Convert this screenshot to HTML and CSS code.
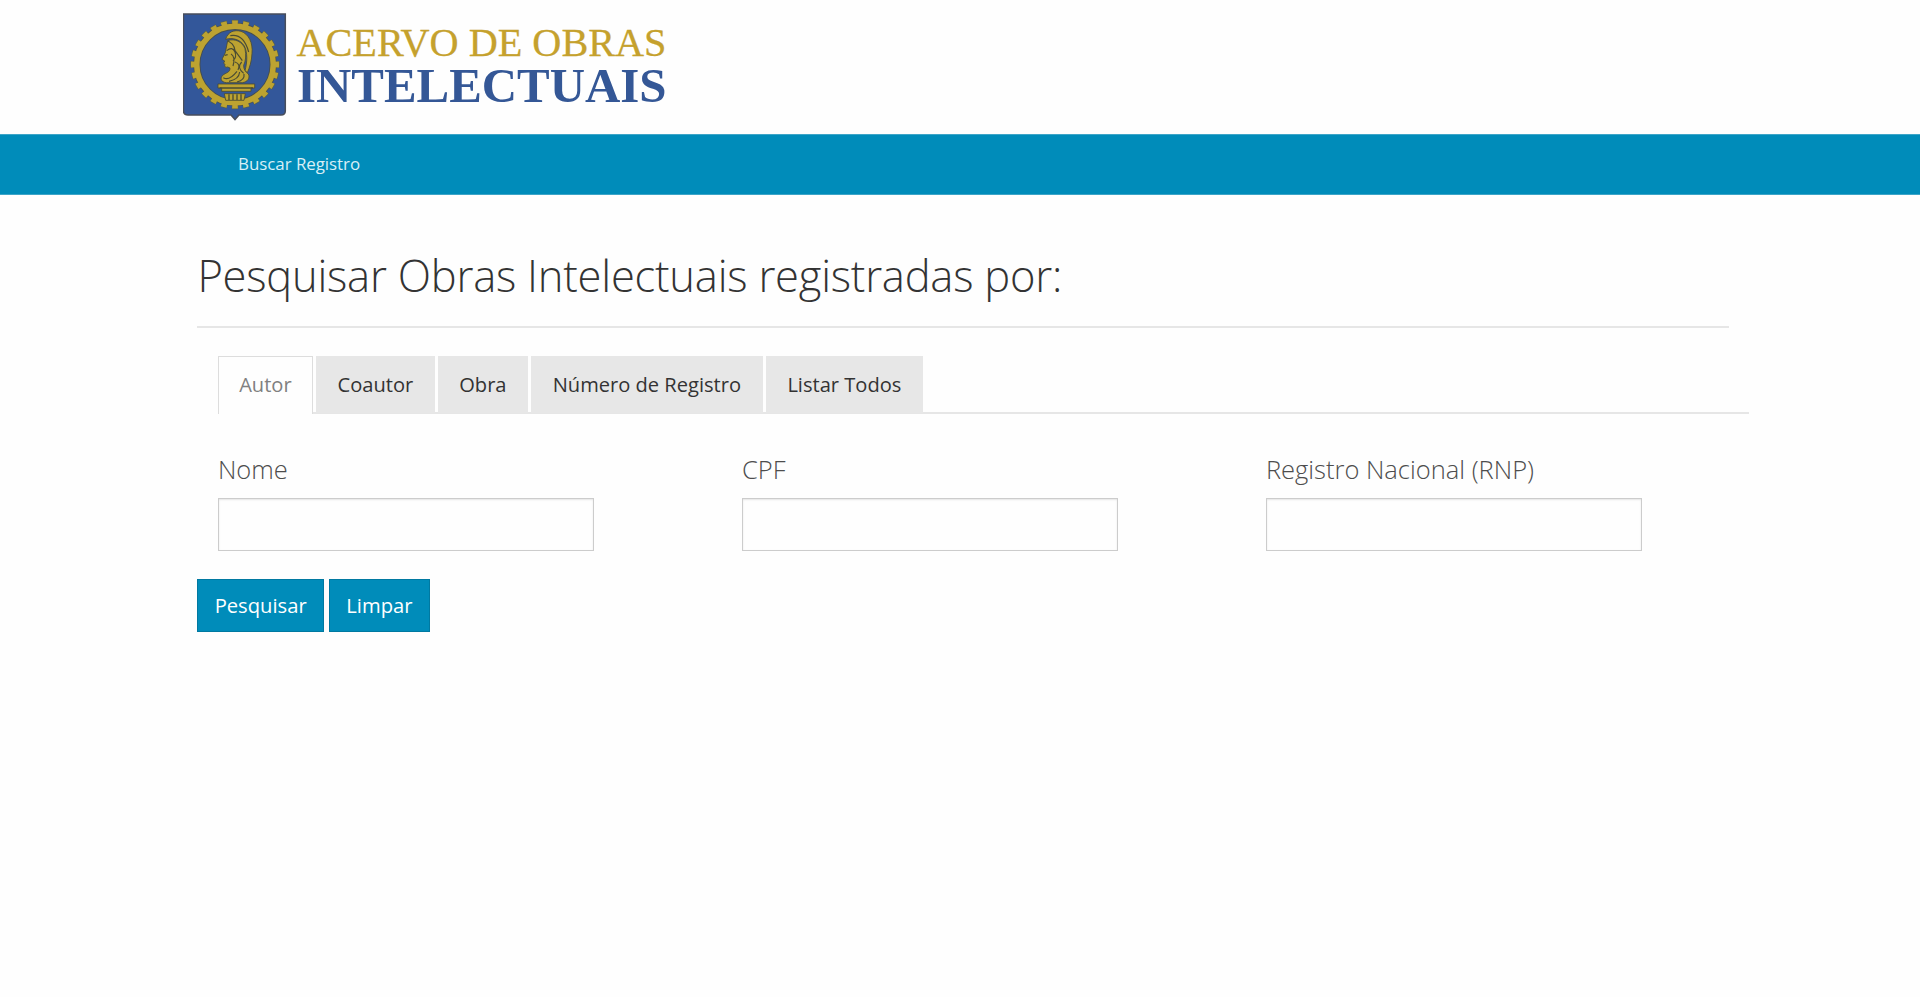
FILE: index.html
```html
<!DOCTYPE html>
<html lang="pt-BR">
<head>
<meta charset="utf-8">
<title>Acervo de Obras Intelectuais</title>
<link rel="stylesheet" href="styles.css">
</head>
<body>
<header class="header">
  <svg class="logo" width="490" height="134" viewBox="183 0 490 134" role="img" aria-label="Acervo de Obras Intelectuais">
    <path d="M183.500 14H285.300V111Q285.300 115 281 115H239L235 119.500L231 115H188Q183.500 115 183.500 111Z" fill="#33579a" stroke="#484e5c" stroke-width="1.500"/>
    <g fill="none">
      <circle cx="235" cy="64.500" r="42" stroke="#55604f" stroke-width="5.400" pathLength="240" stroke-dasharray="6 4" stroke-dashoffset="3"/>
      <circle cx="235" cy="64.500" r="38.200" stroke="#454e50" stroke-width="7.200"/>
      <circle cx="235" cy="64.500" r="41.800" stroke="#bda331" stroke-width="4.400" pathLength="240" stroke-dasharray="5.200 4.800" stroke-dashoffset="2.600"/>
      <circle cx="235" cy="64.500" r="38.300" stroke="#bda331" stroke-width="5.600"/>
    </g>
    <g transform="translate(213 28) scale(.3333)" fill="#bda331" stroke="#4a4c33" stroke-width="2.500" stroke-linejoin="round">
      <path d="M38 34C44 12 64 4 84 10C108 18 120 46 117 76C116 100 110 118 103 134L96 128C103 102 104 74 94 54C82 34 58 28 38 34Z"/>
      <path d="M44 38C66 30 88 42 96 62C100 82 98 100 92 112C92 126 98 132 106 138C112 150 104 162 88 164H40C24 162 20 152 29 142C38 134 52 134 51 120L44 117C37 120 33 115 36 110L32 105L35 99L27 94L37 74Z"/>
      <path d="M44 38C54 44 64 50 66 68L88 98M41 68Q58 54 66 72Q72 88 60 98M54 78Q68 86 60 114M66 102Q84 108 75 126M86 102Q70 118 92 136M31 149Q48 160 72 130M48 160Q78 154 80 132M72 162Q96 156 93 138M52 23Q92 16 107 72M35 82L44 80" fill="none" stroke-width="3.500"/>
      <path d="M15 168H125V180H114V190H26V180H15ZM34 197H97L93 217H38Z"/>
      <path d="M20 180H120M48 199V216M60 199V216M72 199V216M84 199V216" fill="none" stroke-width="4"/>
    </g>
    <text class="logo-top" x="296.500" y="55.700" textLength="370" lengthAdjust="spacingAndGlyphs">ACERVO DE OBRAS</text>
    <text class="logo-bottom" x="297" y="101.500" textLength="369.500" lengthAdjust="spacingAndGlyphs">INTELECTUAIS</text>
  </svg>
</header>
<nav class="nav"><a class="nav-link">Buscar Registro</a></nav>
<main class="main">
  <h1 class="title">Pesquisar Obras Intelectuais registradas por:</h1>
  <div class="tabs">
    <a class="tab tab-author">Autor</a>
    <a class="tab tab-coauthor">Coautor</a>
    <a class="tab tab-work">Obra</a>
    <a class="tab tab-number">Número de Registro</a>
    <a class="tab tab-all">Listar Todos</a>
  </div>
  <form class="form">
    <div class="fields">
      <div class="field"><label class="label" for="nome">Nome</label><input class="input" id="nome" type="text"></div>
      <div class="field"><label class="label" for="cpf">CPF</label><input class="input" id="cpf" type="text"></div>
      <div class="field"><label class="label" for="rnp">Registro Nacional (RNP)</label><input class="input" id="rnp" type="text"></div>
    </div>
    <div class="actions">
      <button class="button button-search" type="button">Pesquisar</button>
      <button class="button button-clear" type="button">Limpar</button>
    </div>
  </form>
</main>
</body>
</html>
```
FILE: styles.css
```css
* { box-sizing: border-box; }
body { margin: 0; background: #fefefe; color: #333; font-family: "Open Sans", sans-serif; }
.header { height: 134px; padding-left: 183px; }
.logo { display: block; }
.logo-top, .logo-bottom { font-family: "Liberation Serif", serif; }
.logo-top { font-size: 41px; fill: #c5a12d; stroke: #c5a12d; stroke-width: .3px; }
.logo-bottom { font-size: 49px; font-weight: bold; fill: #345796; }
.nav { height: 61px; padding-left: 238px; background: #008cba; border: 1px solid #3da5c8; border-width: 1px 0; }
.nav-link { color: #d9eff6; font-size: 16.9px; line-height: 58px; letter-spacing: -.03px; }
.main { padding: 50px 171px 0 197.4px; }
.title { width: 1531.500px; height: 83px; margin: 0; padding-top: 1px; border-bottom: 2px solid #e6e6e6; font-size: 43.5px; line-height: 60px; font-weight: 300; letter-spacing: -.22px; white-space: nowrap; }
.tabs { display: flex; gap: 3px; height: 58px; margin: 28px 0 0 20.5px; border-bottom: 2px solid #e6e6e6; }
.tab { height: 57px; background: #e7e7e7; font-size: 20.1px; line-height: 57px; text-align: center; white-space: nowrap; }
.tab-author { width: 95px; height: 58px; border: 1px solid #ddd; border-bottom: 0; background: #fefefe; color: #808080; line-height: 55px; }
.tab-coauthor { width: 119px; }
.tab-work { width: 90px; }
.tab-number { width: 232px; }
.tab-all { width: 157px; }
.fields { display: grid; grid-template-columns: 524px 524px 376px; padding: 37px 0 0 20.5px; }
.field { display: flex; flex-direction: column; width: 376px; }
.label { height: 47px; font-size: 25.5px; line-height: 37px; font-weight: 300; color: #4d4d4d; white-space: nowrap; }
.input { width: 376px; height: 53px; border: 1px solid #ccc; border-radius: 0; background: #fefefe; box-shadow: inset 0 1px 2px rgba(0,0,0,.1); font: 20px "Open Sans", sans-serif; }
.actions { display: flex; gap: 5px; margin-top: 28px; }
.button { height: 53px; padding: 0 0 1px; border: 1px solid #0079a1; border-radius: 0; background: #008cba; color: #fff; font: 20.2px "Open Sans", sans-serif; }
.button-search { width: 126.5px; }
.button-clear { width: 101px; }
```
